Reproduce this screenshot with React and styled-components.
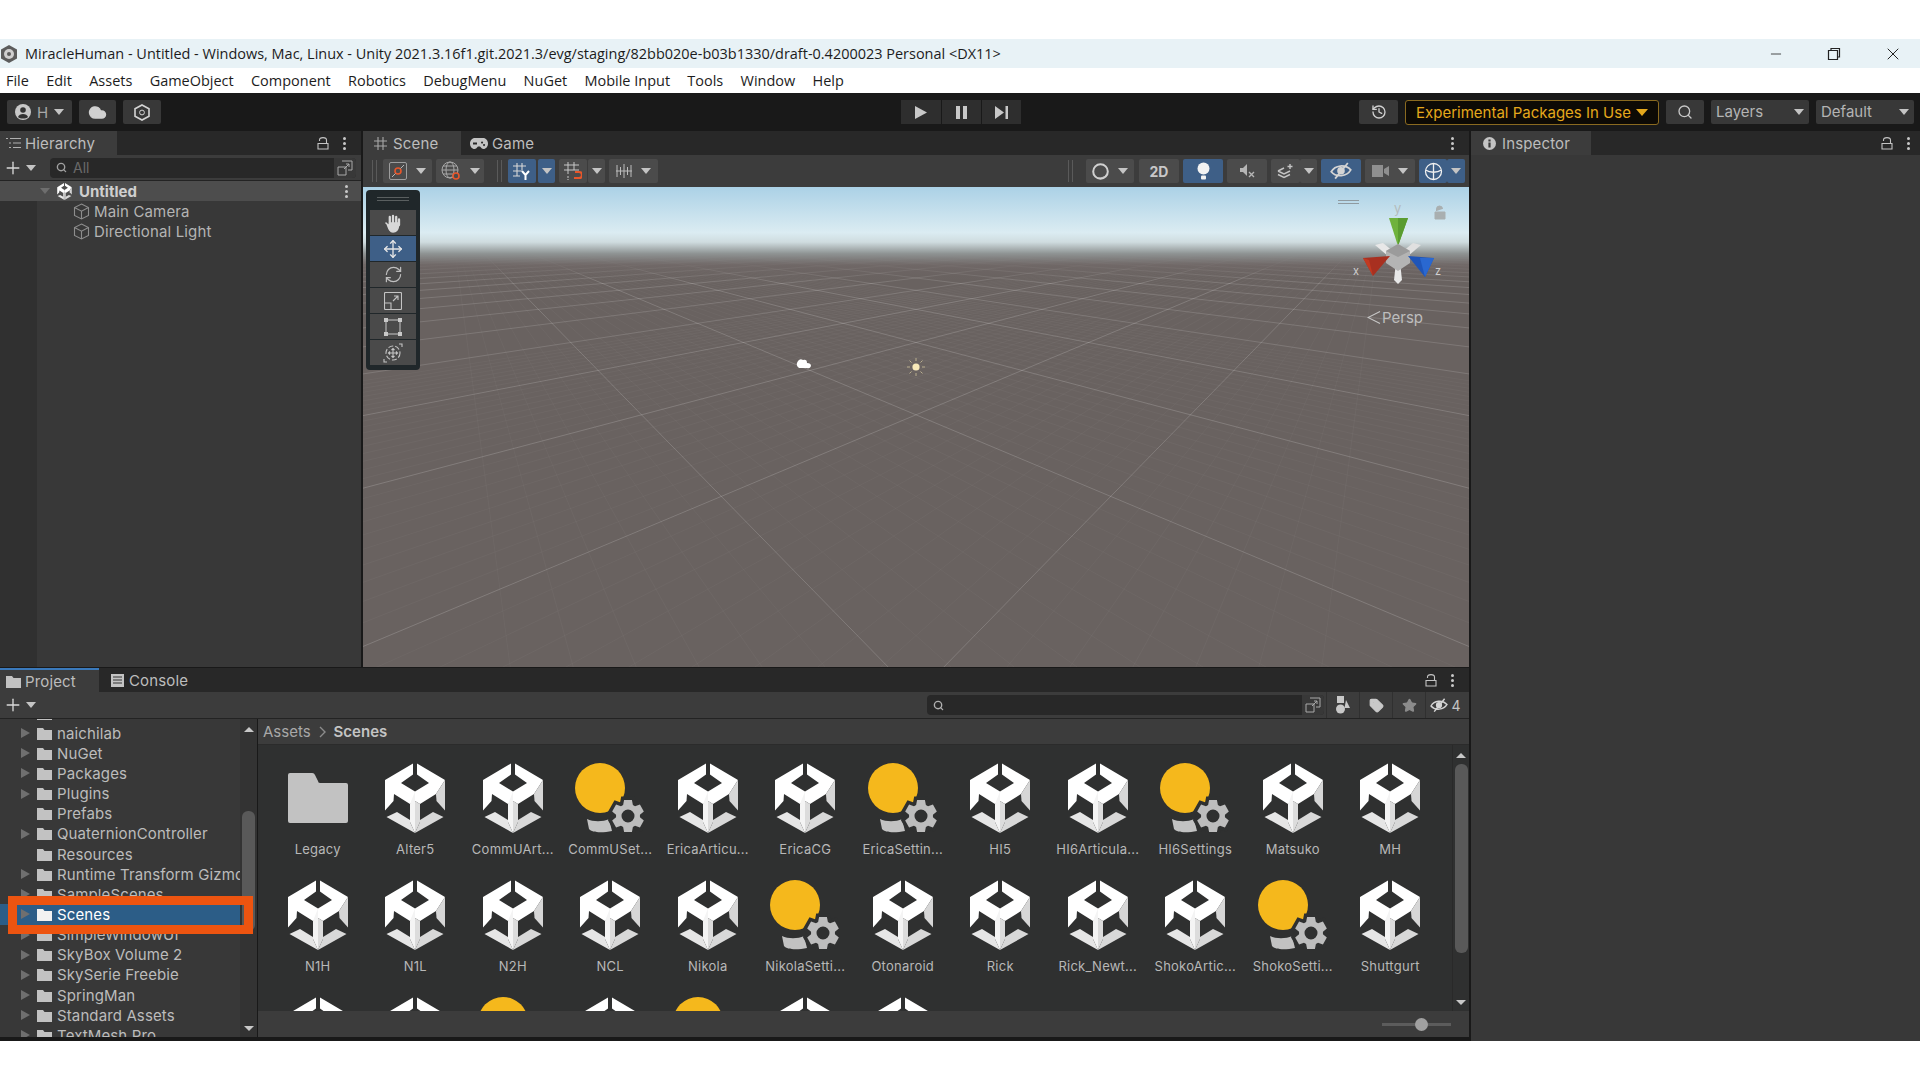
import styled, { createGlobalStyle } from "styled-components";
import { Move, Plus, RefreshCw, Search, Star, Tag, History, Cloud, X, Minus } from "lucide-react";

const GlobalStyle = createGlobalStyle`
  html, body {
    margin: 0;
    background: #ffffff;
  }
  * {
    box-sizing: border-box;
  }
`;

const menus = ["File", "Edit", "Assets", "GameObject", "Component", "Robotics", "DebugMenu", "NuGet", "Mobile Input", "Tools", "Window", "Help"];

const folders = [
  { name: "Oculus", arrow: true },
  { name: "naichilab", arrow: true },
  { name: "NuGet", arrow: true },
  { name: "Packages", arrow: true },
  { name: "Plugins", arrow: true },
  { name: "Prefabs" },
  { name: "QuaternionController", arrow: true },
  { name: "Resources" },
  { name: "Runtime Transform Gizmos", arrow: true },
  { name: "SampleScenes", arrow: true },
  { name: "Scenes", arrow: true, selected: true },
  { name: "SimpleWindowUI", arrow: true },
  { name: "SkyBox Volume 2", arrow: true },
  { name: "SkySerie Freebie", arrow: true },
  { name: "SpringMan", arrow: true },
  { name: "Standard Assets", arrow: true },
  { name: "TextMesh Pro", arrow: true },
];

const assets = [
  ["Legacy", "folder"], ["Alter5", "unity"], ["CommUArt...", "unity"], ["CommUSet...", "light"],
  ["EricaArticu...", "unity"], ["EricaCG", "unity"], ["EricaSettin...", "light"], ["HI5", "unity"],
  ["HI6Articula...", "unity"], ["HI6Settings", "light"], ["Matsuko", "unity"], ["MH", "unity"],
  ["N1H", "unity"], ["N1L", "unity"], ["N2H", "unity"], ["NCL", "unity"],
  ["Nikola", "unity"], ["NikolaSetti...", "light"], ["Otonaroid", "unity"], ["Rick", "unity"],
  ["Rick_Newt...", "unity"], ["ShokoArtic...", "unity"], ["ShokoSetti...", "light"], ["Shuttgurt", "unity"],
  ["", "unity"], ["", "unity"], ["", "light"], ["", "unity"], ["", "light"], ["", "unity"], ["", "unity"],
];

// builds the cog outline used on lighting settings assets
function gearPath(cx, cy, outer, inner, hole) {
  let d = "";
  for (let i = 0; i < 6; i++) {
    const a = (Math.PI / 3) * i - Math.PI / 2;
    const pts = [
      [inner, a - 0.42], [outer, a - 0.24], [outer, a + 0.24], [inner, a + 0.42],
    ];
    pts.forEach(([r, t], n) => {
      const x = (cx + r * Math.cos(t)).toFixed(2);
      const y = (cy + r * Math.sin(t)).toFixed(2);
      d += `${i === 0 && n === 0 ? "M" : "L"}${x} ${y} `;
    });
  }
  d += `Z M${cx + hole} ${cy} A${hole} ${hole} 0 1 0 ${cx - hole} ${cy} A${hole} ${hole} 0 1 0 ${cx + hole} ${cy} Z`;
  return d;
}

// perspective floor, both line families run to a vanishing point on the horizon
function floorLines(vpX, step, limit) {
  const lines = [];
  for (let k = -1.9; k < limit; k += step) {
    const inv = 0.00483 + 0.00303 * k;
    if (inv <= 0) continue;
    const yAtCenter = 220 + 1 / inv;
    const slope = (yAtCenter - 220) / (916 - vpX);
    const edge = vpX > 916 ? -400 : 2400;
    lines.push({ x1: vpX - 363, y1: 220 - 187, x2: edge - 363, y2: 220 + slope * (edge - vpX) - 187 });
  }
  return lines;
}

function UnityLogo({ x = 5, y = 0 }) {
  return (
    <g transform={`translate(${x} ${y})`}>
      <polygon fill="#ffffff" points="28,0.5 28,11.5 16,20 30,28.5 30,38 25,41 9,31 8.5,38 0,47.5 0,17" />
      <polygon fill="#f4f4f4" points="30,28.5 30,70 25,59 25,41" />
      <polygon fill="#ffffff" points="32,0.5 32,11.5 44,20 30,28.5 30,38 35,41 51,31 60,17" />
      <polygon fill="#d6d6d6" points="60,17 60,47.5 51.5,38 51,31" />
      <polygon fill="#dcdcdc" points="30,38 35,41 35,59 30,70" />
      <polygon fill="#e6e6e6" points="1.5,54 12,49 25,57 25,59 30,70" />
      <polygon fill="#d8d8d8" points="58.5,54 48,49 35,57 35,59 30,70" />
    </g>
  );
}

function AssetIcon({ kind }) {
  if (kind === "folder") {
    return (
      <svg width="70" height="70" viewBox="0 0 70 70">
        <path fill="#c2c2c2" d="M5 12 a2 2 0 0 1 2 -2 h22 a3 3 0 0 1 3 2 l3 6 a2 2 0 0 0 2 2 h26 a2 2 0 0 1 2 2 v36 a2 2 0 0 1 -2 2 H7 a2 2 0 0 1 -2 -2 Z" />
      </svg>
    );
  }
  if (kind === "light") {
    return (
      <svg width="70" height="70" viewBox="0 0 70 70">
        <circle cx="25" cy="25" r="25" fill="#f5b81c" />
        <path fill="#c2c2c2" d="M12 56 C18 59 28 59 34 56 L37 68 C28 70 17 70 14 66 Z" />
        <path d={gearPath(53, 53, 16.5, 12, 0.1)} fill="#2f3030" stroke="#2f3030" strokeWidth="7" />
        <path d={gearPath(53, 53, 16.5, 12, 6.5)} fill="#bdbdbd" fillRule="evenodd" />
      </svg>
    );
  }
  return (
    <svg width="70" height="70" viewBox="0 0 70 70">
      <UnityLogo />
    </svg>
  );
}

function FolderGlyph({ color = "#c2c2c2" }) {
  return (
    <svg width="15" height="13" viewBox="0 0 15 13">
      <path fill={color} d="M0 1 h6 l1.5 2 H15 V13 H0 Z" />
    </svg>
  );
}

function CubeGlyph() {
  return (
    <svg width="17" height="17" viewBox="0 0 17 17" fill="none" stroke="#8d8d8d" strokeWidth="1.1">
      <path d="M8.5 1 L15.5 4.6 V12.4 L8.5 16 L1.5 12.4 V4.6 Z M1.5 4.6 L8.5 8.2 L15.5 4.6 M8.5 8.2 V16" />
    </svg>
  );
}

function LockGlyph() {
  return (
    <svg width="12" height="13" viewBox="0 0 12 13" fill="none" stroke="#c4c4c4" strokeWidth="1.1">
      <path d="M2.5 4 V3 a3.5 2.4 0 0 1 7 0 V6 M1 6.5 H11 V12 H1 Z" />
    </svg>
  );
}

function Kebab() {
  return (
    <KebabDots>
      <i />
      <i />
      <i />
    </KebabDots>
  );
}

function ObjectPicker() {
  return (
    <svg width="16" height="16" viewBox="0 0 16 16" fill="none" stroke="#a9a9a9" strokeWidth="1">
      <path d="M5 1 H15 V10 H11 M1 7 H9 V15 H1 Z M7 9 L12 4 M9 4 H12 V7" />
    </svg>
  );
}

function EyeOff({ size = 22 }) {
  return (
    <svg width={size} height={size * 0.8} viewBox="0 0 22 18" fill="none" stroke="#d4d4d4" strokeWidth="1.8">
      <path d="M1 10 C5 3 15 2 21 8 C17 15 6 16 1 10 Z" />
      <circle cx="11" cy="9" r="3" fill="#d4d4d4" />
      <path d="M5 17 L18 1" />
    </svg>
  );
}

export default function App() {
  const majorR = floorLines(1381, 1, 24);
  const majorL = floorLines(451, 1, 24);
  const minorR = floorLines(1381, 0.1, 3);
  const minorL = floorLines(451, 0.1, 3);

  return (
    <Page>
      <GlobalStyle />
      <TopGap />
      <TitleBar>
        <svg width="18" height="18" viewBox="0 0 18 18">
          <path d="M9 0 L17 4.5 V13.5 L9 18 L1 13.5 V4.5 Z" fill="#5c5c5c" />
          <circle cx="9" cy="9" r="5" fill="#cfcfcf" />
          <circle cx="9" cy="9" r="2" fill="#5c5c5c" />
        </svg>
        <TitleText>MiracleHuman - Untitled - Windows, Mac, Linux - Unity 2021.3.16f1.git.2021.3/evg/staging/82bb020e-b03b1330/draft-0.4200023 Personal &lt;DX11&gt;</TitleText>
        <WindowControls>
          <Minus size={16} strokeWidth={1.2} color="#222" />
          <svg width="14" height="14" viewBox="0 0 14 14" fill="none" stroke="#222" strokeWidth="1.2">
            <path d="M4 3 V1.5 H12.5 V10 H10.5 M1.5 3.5 H10.5 V12.5 H1.5 Z" />
          </svg>
          <X size={20} strokeWidth={1.2} color="#222" />
        </WindowControls>
      </TitleBar>
      <MenuBar>
        {menus.map((m) => (
          <MenuItem key={m}>{m}</MenuItem>
        ))}
      </MenuBar>
      <MainToolbar>
        <ToolbarSide>
          <DarkButton $w={65}>
            <svg width="16" height="16" viewBox="0 0 16 16">
              <circle cx="8" cy="8" r="8" fill="#c8c8c8" />
              <circle cx="8" cy="6" r="2.8" fill="#333" />
              <path d="M3 13 C4 9 12 9 13 13 C11 15 5 15 3 13" fill="#333" />
            </svg>
            <DarkLabel>H</DarkLabel>
            <Caret />
          </DarkButton>
          <DarkButton $w={37}>
            <Cloud size={19} fill="#d0d0d0" color="#d0d0d0" />
          </DarkButton>
          <DarkButton $w={38}>
            <svg width="16" height="17" viewBox="0 0 16 17" fill="none" stroke="#d4d4d4" strokeWidth="1.6">
              <path d="M8 1 L15 4.8 V12.2 L8 16 L1 12.2 V4.8 Z" />
              <circle cx="8" cy="8.5" r="2.4" strokeWidth="1" />
            </svg>
          </DarkButton>
        </ToolbarSide>
        <PlayGroup>
          <PlayButton $w={40}>
            <svg width="12" height="13" viewBox="0 0 12 13"><path d="M0 0 L12 6.5 L0 13 Z" fill="#c8c8c8" /></svg>
          </PlayButton>
          <PlayButton $w={39}>
            <svg width="11" height="13" viewBox="0 0 11 13"><path d="M0 0 H4 V13 H0 Z M7 0 H11 V13 H7 Z" fill="#c8c8c8" /></svg>
          </PlayButton>
          <PlayButton $w={39}>
            <svg width="13" height="13" viewBox="0 0 13 13"><path d="M0 0 L9 6.5 L0 13 Z M10.5 0 H13 V13 H10.5 Z" fill="#c8c8c8" /></svg>
          </PlayButton>
        </PlayGroup>
        <ToolbarRight>
          <DarkButton $w={39}>
            <History size={16} color="#d0d0d0" />
          </DarkButton>
          <ExperimentalButton>
            Experimental Packages In Use
            <Caret $color="#e5a81c" $size={6} />
          </ExperimentalButton>
          <DarkButton $w={38}>
            <Search size={16} color="#c8c8c8" />
          </DarkButton>
          <DropButton>
            Layers
            <Caret />
          </DropButton>
          <DropButton>
            Default
            <Caret />
          </DropButton>
        </ToolbarRight>
      </MainToolbar>

      <Workspace>
        <LeftColumn>
          <UpperRow>
            <HierarchyPanel>
              <TabBar>
                <Tab $w={117} $pad={6} $gap={4}>
                  <svg width="15" height="12" viewBox="0 0 15 12" fill="none" stroke="#b0b0b0" strokeWidth="1.2">
                    <path d="M0 1.5 H2 M4 1.5 H15 M3 6 H5 M7 6 H15 M3 10.5 H5 M7 10.5 H15" />
                  </svg>
                  Hierarchy
                </Tab>
                <TabActions $pr={15}>
                  <LockGlyph />
                  <Kebab />
                </TabActions>
              </TabBar>
              <PanelTools>
                <AddButton>
                  <Plus size={20} color="#d8d8d8" strokeWidth={1.6} />
                </AddButton>
                <Caret />
                <SearchField $w={306} $ml={14}>
                  <Search size={11} color="#a0a0a0" strokeWidth={3} />
                  <Placeholder>All</Placeholder>
                  <PickerSlot>
                    <ObjectPicker />
                  </PickerSlot>
                </SearchField>
              </PanelTools>
              <HierarchyBody>
                <SceneRow>
                  <Caret $color="#6e6e6e" />
                  <svg width="17" height="17" viewBox="0 0 60 70">
                    <UnityLogo x={0} />
                  </svg>
                  <SceneName>Untitled</SceneName>
                  <SceneKebab>
                    <Kebab />
                  </SceneKebab>
                </SceneRow>
                <ObjectRow>
                  <CubeGlyph />
                  Main Camera
                </ObjectRow>
                <ObjectRow>
                  <CubeGlyph />
                  Directional Light
                </ObjectRow>
              </HierarchyBody>
            </HierarchyPanel>

            <ScenePanel>
              <TabBar>
                <Tab $w={98} $pad={11} $gap={6}>
                  <svg width="13" height="13" viewBox="0 0 13 13" fill="none" stroke="#a8a8a8" strokeWidth="1.1">
                    <path d="M4 0 V13 M9 0 V13 M0 4 H13 M0 9 H13" />
                  </svg>
                  Scene
                </Tab>
                <PlainTab $pad={9} $gap={4}>
                  <svg width="18" height="11" viewBox="0 0 18 11">
                    <path fill="#c4c4c4" fillRule="evenodd" d="M5 0 H13 C16 0 18 2.5 18 5.5 C18 8.5 16 11 13.5 11 C12 11 11 9.5 10 8.5 H8 C7 9.5 6 11 4.5 11 C2 11 0 8.5 0 5.5 C0 2.5 2 0 5 0 Z M3 4.5 V6.5 H7 V4.5 Z M12 3.5 a1 1 0 1 0 .1 0 Z M14 6 a1 1 0 1 0 .1 0 Z" />
                  </svg>
                  Game
                </PlainTab>
                <TabActions $pr={15}>
                  <Kebab />
                </TabActions>
              </TabBar>
              <SceneTools>
                <Grip />
                <ToolButton $w={49}>
                  <svg width="18" height="18" viewBox="0 0 18 18" fill="none">
                    <rect x="0.5" y="0.5" width="17" height="17" rx="1.5" stroke="#9d9d9d" />
                    <circle cx="9" cy="9" r="3" stroke="#e8562a" strokeWidth="1.6" />
                    <path d="M3 15 L6.5 11.5 M11.5 6.5 L15 3" stroke="#b5b5b5" />
                  </svg>
                  <Caret />
                </ToolButton>
                <ToolButton $w={48} $ml={4}>
                  <svg width="20" height="20" viewBox="0 0 20 20" fill="none" stroke="#a8a8a8" strokeWidth="1">
                    <circle cx="9" cy="9" r="8" />
                    <ellipse cx="9" cy="9" rx="4" ry="8" />
                    <path d="M1 9 H17 M2 5 H16 M2 13 H16" />
                    <circle cx="15" cy="15" r="3" stroke="#e8562a" strokeWidth="1.6" fill="#4b4b4b" />
                  </svg>
                  <Caret />
                </ToolButton>
                <Grip $ml={13} />
                <ToolButton $w={28} $active>
                  <svg width="18" height="18" viewBox="0 0 18 18" fill="none" stroke="#d8d8d8" strokeWidth="1.1">
                    <path d="M4 1 V14 M9 1 V8 M0 4 H13 M0 9 H9 M0 14 H7" />
                    <path d="M9 9 L12.5 13 L16 9 M12.5 13 V18" strokeWidth="2" stroke="#ffffff" />
                  </svg>
                </ToolButton>
                <ToolButton $w={17} $ml={2} $active>
                  <Caret />
                </ToolButton>
                <ToolButton $w={28} $ml={4}>
                  <svg width="18" height="18" viewBox="0 0 18 18" fill="none" stroke="#c8c8c8" strokeWidth="1">
                    <path d="M4 0 V12 M10 0 V8 M0 3 H15 M0 8 H15" />
                    <path d="M11 10 H15 A3 3 0 0 1 15 16 H10" stroke="#e8562a" strokeWidth="2.2" />
                    <path d="M4 14 V18" strokeDasharray="2 1" />
                  </svg>
                </ToolButton>
                <ToolButton $w={17} $ml={1}>
                  <Caret />
                </ToolButton>
                <ToolButton $w={49} $ml={4}>
                  <svg width="16" height="16" viewBox="0 0 16 16" fill="none" stroke="#bdbdbd" strokeWidth="1">
                    <path d="M1 2 V14 M4.5 4 V12 M8 1 V15 M11.5 4 V12 M15 2 V14 M0 8 H16" />
                  </svg>
                  <Caret />
                </ToolButton>
                <SceneToolsRight>
                  <Grip />
                  <ToolButton $w={48} $ml={7}>
                    <svg width="17" height="17" viewBox="0 0 17 17" fill="none">
                      <circle cx="8.5" cy="8.5" r="7.3" stroke="#d0d0d0" strokeWidth="2" />
                      <path d="M3 13 A7 7 0 0 0 15 10 A8 8 0 0 1 3 13" fill="#d0d0d0" />
                    </svg>
                    <Caret />
                  </ToolButton>
                  <ToolButton $w={40} $ml={5}>
                    <ToolText>2D</ToolText>
                  </ToolButton>
                  <ToolButton $w={40} $ml={4} $active>
                    <svg width="13" height="18" viewBox="0 0 13 18">
                      <circle cx="6.5" cy="6.5" r="6" fill="#f2f2f2" />
                      <rect x="4" y="13.5" width="5" height="4" rx="1" fill="#f2f2f2" />
                    </svg>
                  </ToolButton>
                  <ToolButton $w={40} $ml={4}>
                    <svg width="15" height="14" viewBox="0 0 15 14">
                      <path d="M0 4 H3 L7 0 V12 L3 8 H0 Z" fill="#b5b5b5" />
                      <path d="M9 8 L14 13 M14 8 L9 13" stroke="#b5b5b5" strokeWidth="1.4" />
                    </svg>
                  </ToolButton>
                  <ToolButton $w={29} $ml={4}>
                    <svg width="17" height="16" viewBox="0 0 17 16" fill="none" stroke="#c4c4c4" strokeWidth="1.4">
                      <path d="M1 8 L7 11 L13 8 M1 11.5 L7 14.5 L13 11.5 M1 8 L7 5" />
                      <path d="M13 1 V6 M10.5 3.5 H15.5" />
                    </svg>
                  </ToolButton>
                  <ToolButton $w={17}>
                    <Caret />
                  </ToolButton>
                  <ToolButton $w={40} $ml={4} $active>
                    <EyeOff />
                  </ToolButton>
                  <ToolButton $w={50} $ml={4}>
                    <svg width="17" height="12" viewBox="0 0 17 12">
                      <path d="M0 0 H11 V12 H0 Z M12 4 L17 1 V11 L12 8 Z" fill="#8f8f8f" />
                    </svg>
                    <Caret />
                  </ToolButton>
                  <ToolButton $w={28} $ml={4} $active>
                    <svg width="19" height="19" viewBox="0 0 19 19" fill="none" stroke="#f0f0f0" strokeWidth="1.3">
                      <circle cx="9.5" cy="9.5" r="8" />
                      <path d="M1.5 8 C6 11 13 11 17.5 8 M9.5 1.5 V17.5" />
                    </svg>
                  </ToolButton>
                  <ToolButton $w={18} $active>
                    <Caret />
                  </ToolButton>
                </SceneToolsRight>
              </SceneTools>
              <SceneView>
                <FloorDrawing viewBox="0 0 1106 480" preserveAspectRatio="none">
                  <defs>
                    <linearGradient id="sky" x1="0" y1="0" x2="0" y2="1">
                      <stop offset="0" stopColor="#abd1e6" />
                      <stop offset="0.48" stopColor="#dbecf2" />
                      <stop offset="0.58" stopColor="#cfdcdf" />
                      <stop offset="0.7" stopColor="#8f9494" />
                      <stop offset="0.82" stopColor="#716968" stopOpacity="0.85" />
                      <stop offset="1" stopColor="#696260" stopOpacity="0" />
                    </linearGradient>
                  </defs>
                  {[...minorR, ...minorL].map((l, i) => (
                    <line key={`m${i}`} {...l} stroke="#ffffff" strokeOpacity="0.03" />
                  ))}
                  {[...majorR, ...majorL].map((l, i) => (
                    <line key={`l${i}`} {...l} stroke="#ffffff" strokeOpacity="0.14" />
                  ))}
                  <rect x="0" y="0" width="1106" height="95" fill="url(#sky)" />
                  <path d="M435 174 q2 -3 5 -1 q4 -1 4 3 q4 0 4 3 q-1 3 -4 2 h-8 q-4 -3 -1 -7" fill="#ffffff" />
                  <g transform="translate(553 180)" stroke="#b9ae8e" strokeWidth="1">
                    <path d="M0 -9 V-6 M0 6 V9 M-9 0 H-6 M6 0 H9 M-6.5 -6.5 L-4.5 -4.5 M6.5 6.5 L4.5 4.5 M6.5 -6.5 L4.5 -4.5 M-6.5 6.5 L-4.5 4.5" />
                    <circle r="3.6" fill="#f7e8b8" stroke="none" />
                  </g>
                </FloorDrawing>
                <ToolPalette>
                  <PaletteGrip />
                  <PaletteButton>
                    <svg width="20" height="20" viewBox="0 0 20 20" fill="none" stroke="#d8d8d8" strokeLinecap="round">
                      <path d="M10 3 V10 M6.8 4 V10.5 M13.2 4 V10.5 M16 6.5 V12" strokeWidth="2.3" />
                      <path d="M3 10 L6 13 M6.5 10 H15.5 V13 C15 17 13 19 10 19 C7 19 6 16 4.5 12" fill="#d8d8d8" strokeWidth="1.6" />
                    </svg>
                  </PaletteButton>
                  <PaletteButton $active>
                    <Move size={20} color="#e6e6e6" strokeWidth={1.6} />
                  </PaletteButton>
                  <PaletteButton>
                    <RefreshCw size={19} color="#c0c0c0" strokeWidth={1.5} />
                  </PaletteButton>
                  <PaletteButton>
                    <svg width="18" height="18" viewBox="0 0 18 18" fill="none" stroke="#c4c4c4" strokeWidth="1.1">
                      <rect x="0.5" y="0.5" width="17" height="17" rx="1" />
                      <path d="M0.5 11 H7 V17.5 M9 9 L14 4 M10 4 H14 V8" />
                    </svg>
                  </PaletteButton>
                  <PaletteButton>
                    <svg width="18" height="18" viewBox="0 0 18 18" fill="#c8c8c8" stroke="#c8c8c8" strokeWidth="1">
                      <path d="M3 2 H15 M3 16 H15 M2 3 V15 M16 3 V15" fill="none" />
                      <rect x="0.5" y="0.5" width="3" height="3" />
                      <rect x="14.5" y="0.5" width="3" height="3" />
                      <rect x="0.5" y="14.5" width="3" height="3" />
                      <rect x="14.5" y="14.5" width="3" height="3" />
                    </svg>
                  </PaletteButton>
                  <PaletteButton>
                    <svg width="20" height="20" viewBox="0 0 20 20" fill="none" stroke="#c4c4c4" strokeWidth="1.1">
                      <circle cx="10" cy="10" r="7" strokeDasharray="5 2" />
                      <path d="M10 5.5 V14.5 M5.5 10 H14.5 M8.5 7 L10 5.5 L11.5 7 M8.5 13 L10 14.5 L11.5 13 M7 8.5 L5.5 10 L7 11.5 M13 8.5 L14.5 10 L13 11.5" />
                      <path d="M16 1 H19 V4 M1 16 V19 H4" />
                    </svg>
                  </PaletteButton>
                </ToolPalette>
                <ViewGrip />
                <GizmoDrawing width="100" height="100" viewBox="0 0 100 100">
                  <text x="44" y="13" fontSize="13" fill="#b4bcbc" fontFamily="Inter, sans-serif">y</text>
                  <text x="3" y="75" fontSize="11" fill="#d0d0d0" fontFamily="Inter, sans-serif">x</text>
                  <text x="85" y="75" fontSize="11" fill="#d0d0d0" fontFamily="Inter, sans-serif">z</text>
                  <polygon points="39,18 58,18 48,46" fill="#6fb23c" />
                  <polygon points="48,18 58,18 48,46" fill="#5a9c30" />
                  <polygon points="25,45 33,43 44,52 38,56" fill="#e8e8e8" />
                  <polygon points="71,45 63,43 52,52 58,56" fill="#e0e0e0" />
                  <polygon points="48,84 44,80 46,62 50,62 52,80" fill="#e8e8e8" />
                  <polygon points="48,44 60,51 60,63 48,71 36,63 36,51" fill="#b4b4b4" />
                  <polygon points="48,44 60,51 48,57 36,51" fill="#9b9b9b" />
                  <polygon points="13,58 40,56 23,76" fill="#a83020" />
                  <polygon points="13,58 23,76 19,60" fill="#c23a22" />
                  <polygon points="58,56 84,58 75,77" fill="#1f55b8" />
                  <polygon points="75,77 84,58 70,58" fill="#2a68d0" />
                  <path d="M86.5 11 V9 a3 3 0 0 1 6 0 M85 12 H95 V19 H85 Z" fill="#a9afb0" stroke="#a9afb0" />
                </GizmoDrawing>
                <PerspLabel>
                  <svg width="14" height="13" viewBox="0 0 14 13" fill="none" stroke="#c8c8c8" strokeWidth="1.1">
                    <path d="M13 0.5 L1 6.5 L13 12.5" />
                  </svg>
                  Persp
                </PerspLabel>
              </SceneView>
            </ScenePanel>
          </UpperRow>

          <ProjectPanel>
            <TabBar>
              <Tab $w={99} $pad={6} $gap={4} $focused>
                <FolderGlyph />
                Project
              </Tab>
              <PlainTab $pad={12} $gap={5}>
                <svg width="13" height="13" viewBox="0 0 13 13">
                  <path fill="#c4c4c4" d="M0 0 H13 V13 H0 Z" />
                  <path stroke="#333" strokeWidth="1" d="M2 3 H11 M2 6 H11 M2 9 H11" />
                </svg>
                Console
              </PlainTab>
              <TabActions $pr={15}>
                <LockGlyph />
                <Kebab />
              </TabActions>
            </TabBar>
            <ProjectTools>
              <AddButton>
                <Plus size={20} color="#d8d8d8" strokeWidth={1.6} />
              </AddButton>
              <Caret />
              <SearchField $w={397} $ml="auto">
                <Search size={11} color="#b0b0b0" strokeWidth={3} />
                <Placeholder />
                <PickerSlot>
                  <ObjectPicker />
                </PickerSlot>
              </SearchField>
              <FilterButton $w={33} $ml={2}>
                <svg width="16" height="18" viewBox="0 0 16 18" fill="#c8c8c8">
                  <rect x="2" y="0" width="7" height="7" />
                  <circle cx="5.5" cy="13" r="4.5" />
                  <path d="M11 4 L15 12 H9.5 Z" />
                </svg>
              </FilterButton>
              <FilterButton $w={33}>
                <Tag size={15} fill="#c8c8c8" color="#c8c8c8" />
              </FilterButton>
              <FilterButton $w={33}>
                <Star size={15} fill="#8b8b8b" color="#8b8b8b" />
              </FilterButton>
              <FilterButton $w={40}>
                <EyeOff size={18} />
                <CountLabel>4</CountLabel>
              </FilterButton>
            </ProjectTools>
            <ProjectBody>
              <FolderTree>
                <TreeList>
                  {folders.map((f) => (
                    <TreeRow key={f.name} $selected={f.selected}>
                      <TreeArrow $show={f.arrow} />
                      <FolderGlyph color={f.selected ? "#f2f2f2" : "#c2c2c2"} />
                      <TreeName $selected={f.selected}>{f.name}</TreeName>
                    </TreeRow>
                  ))}
                </TreeList>
                <TreeScroll>
                  <ScrollArrow />
                  <TreeThumb />
                  <ScrollArrow $down $auto />
                </TreeScroll>
              </FolderTree>
              <AssetArea>
                <Breadcrumb>
                  Assets
                  <svg width="7" height="12" viewBox="0 0 7 12" fill="none" stroke="#8c8c8c" strokeWidth="1.4">
                    <path d="M1 1 L6 6 L1 11" />
                  </svg>
                  <strong>Scenes</strong>
                </Breadcrumb>
                <AssetBody>
                  <AssetGrid>
                    {assets.map(([name, kind], i) => (
                      <AssetCell key={i}>
                        <AssetIcon kind={kind} />
                        <AssetName>{name}</AssetName>
                      </AssetCell>
                    ))}
                  </AssetGrid>
                  <AssetScroll>
                    <ScrollArrow />
                    <AssetThumb />
                    <ScrollArrow $down $auto />
                  </AssetScroll>
                </AssetBody>
                <AssetFooter>
                  <SliderTrack>
                    <SliderKnob />
                  </SliderTrack>
                </AssetFooter>
              </AssetArea>
            </ProjectBody>
          </ProjectPanel>
        </LeftColumn>

        <InspectorPanel>
          <TabBar>
            <Tab $w={120} $pad={12} $gap={6}>
              <svg width="13" height="13" viewBox="0 0 13 13">
                <circle cx="6.5" cy="6.5" r="6.5" fill="#c4c4c4" />
                <rect x="5.4" y="5.5" width="2.2" height="5" fill="#383838" />
                <rect x="5.4" y="2.5" width="2.2" height="2" fill="#383838" />
              </svg>
              Inspector
            </Tab>
            <TabActions $pr={10}>
              <LockGlyph />
              <Kebab />
            </TabActions>
          </TabBar>
        </InspectorPanel>
      </Workspace>
      <BottomGap />
      <Highlight />
    </Page>
  );
}

const Page = styled.div`
  position: relative;
  width: 1920px;
  height: 1080px;
  display: flex;
  flex-direction: column;
  overflow: hidden;
  font-family: Inter, "Noto Sans", sans-serif;
`;
const TopGap = styled.div`
  height: 39px;
  background: #ffffff;
`;
const TitleBar = styled.div`
  height: 29px;
  background: #e8f2f6;
  display: flex;
  align-items: center;
`;
const TitleText = styled.span`
  margin-left: 7px;
  font-family: "Open Sans", sans-serif;
  font-size: 14.47px;
  color: #1c1c1c;
  white-space: nowrap;
`;
const WindowControls = styled.div`
  margin-left: auto;
  width: 152px;
  padding-right: 17px;
  display: flex;
  align-items: center;
  justify-content: space-between;
`;
const MenuBar = styled.div`
  height: 25px;
  background: #ffffff;
  display: flex;
  align-items: center;
  padding-left: 6px;
  gap: 17.3px;
`;
const MenuItem = styled.span`
  font-family: "Open Sans", sans-serif;
  font-size: 14.47px;
  color: #1c1c1c;
`;
const MainToolbar = styled.div`
  height: 38px;
  background: #191919;
  display: grid;
  grid-template-columns: 1fr auto 1fr;
  align-items: center;
  padding: 0 6px 0 7px;
`;
const ToolbarSide = styled.div`
  display: flex;
  gap: 7px;
`;
const ToolbarRight = styled(ToolbarSide)`
  justify-content: flex-end;
`;
const DarkButton = styled.div`
  width: ${(p) => p.$w}px;
  height: 24px;
  background: #383838;
  border-radius: 2px;
  display: flex;
  align-items: center;
  justify-content: center;
  gap: 6px;
`;
const DarkLabel = styled.span`
  color: #a8a8a8;
  font-size: 15px;
`;
const PlayGroup = styled.div`
  display: flex;
  gap: 1px;
`;
const PlayButton = styled(DarkButton)`
  background: #2e2e2e;
  border-radius: 0;
`;
const ExperimentalButton = styled.div`
  width: 254px;
  height: 25px;
  background: #0d0a05;
  border: 1px solid #8a6a20;
  border-radius: 3px;
  color: #e5a81c;
  font-size: 15px;
  display: flex;
  align-items: center;
  justify-content: center;
  gap: 5px;
  white-space: nowrap;
`;
const DropButton = styled.div`
  width: 98px;
  height: 24px;
  background: #383838;
  border-radius: 2px;
  color: #b4b4b4;
  font-size: 15px;
  display: flex;
  align-items: center;
  justify-content: space-between;
  padding: 0 5px;
`;
const Caret = styled.span`
  width: 0;
  height: 0;
  flex: none;
  border-left: ${(p) => p.$size || 5}px solid transparent;
  border-right: ${(p) => p.$size || 5}px solid transparent;
  border-top: ${(p) => (p.$size || 5) + 1}px solid ${(p) => p.$color || "#c4c4c4"};
`;
const Workspace = styled.div`
  height: 910px;
  background: #191919;
  display: flex;
  gap: 2px;
`;
const LeftColumn = styled.div`
  width: 1469px;
  display: flex;
  flex-direction: column;
  gap: 1px;
`;
const UpperRow = styled.div`
  height: 536px;
  display: flex;
  gap: 2px;
`;
const Panel = styled.div`
  display: flex;
  flex-direction: column;
  background: #383838;
  overflow: hidden;
`;
const HierarchyPanel = styled(Panel)`
  width: 361px;
`;
const ScenePanel = styled(Panel)`
  flex: 1;
`;
const InspectorPanel = styled(Panel)`
  flex: 1;
`;
const ProjectPanel = styled(Panel)`
  flex: 1;
  padding-bottom: 4px;
  background: #191919;
`;
const TabBar = styled.div`
  height: 24px;
  flex: none;
  background: #282828;
  display: flex;
  align-items: stretch;
  color: #bdbdbd;
  font-size: 15px;
  letter-spacing: 0.15px;
`;
const Tab = styled.div`
  width: ${(p) => p.$w}px;
  background: #3c3c3c;
  display: flex;
  align-items: center;
  gap: ${(p) => p.$gap}px;
  padding-left: ${(p) => p.$pad}px;
  border-top: ${(p) => (p.$focused ? "2px solid #3a79bb" : "none")};
`;
const PlainTab = styled.div`
  display: flex;
  align-items: center;
  gap: ${(p) => p.$gap}px;
  padding-left: ${(p) => p.$pad}px;
`;
const TabActions = styled.div`
  margin-left: auto;
  padding-right: ${(p) => p.$pr}px;
  display: flex;
  align-items: center;
  gap: 14px;
`;
const KebabDots = styled.span`
  display: flex;
  flex-direction: column;
  gap: 2px;
  i {
    width: 3px;
    height: 3px;
    border-radius: 50%;
    background: #c8c8c8;
  }
`;
const PanelTools = styled.div`
  height: 26px;
  flex: none;
  background: #3c3c3c;
  border-bottom: 1px solid #232323;
  display: flex;
  align-items: center;
  padding-left: 3px;
`;
const ProjectTools = styled(PanelTools)`
  height: 27px;
  padding-right: 4px;
`;
const AddButton = styled.span`
  width: 20px;
  height: 20px;
  margin-right: 3px;
  display: flex;
`;
const SearchField = styled.div`
  width: ${(p) => p.$w}px;
  height: 20px;
  margin-left: ${(p) => (p.$ml === "auto" ? "auto" : `${p.$ml}px`)};
  background: #282828;
  border-radius: 4px;
  display: flex;
  align-items: center;
  padding-left: 6px;
`;
const Placeholder = styled.span`
  margin-left: 6px;
  flex: 1;
  color: #6a6a6a;
  font-size: 14px;
`;
const PickerSlot = styled.span`
  width: 22px;
  height: 20px;
  background: #383838;
  border-radius: 0 4px 4px 0;
  display: flex;
  align-items: center;
  justify-content: center;
`;
const HierarchyBody = styled.div`
  flex: 1;
  background: linear-gradient(90deg, #303030 37px, #383838 37px);
`;
const SceneRow = styled.div`
  height: 20px;
  background: #4d4d4d;
  display: flex;
  align-items: center;
  padding-left: 40px;
  color: #cfcfcf;
  gap: 6px;
`;
const SceneName = styled.span`
  font-size: 15px;
  font-weight: 700;
`;
const SceneKebab = styled.span`
  margin-left: auto;
  padding-right: 13px;
`;
const ObjectRow = styled.div`
  height: 20px;
  display: flex;
  align-items: center;
  gap: 4px;
  padding-left: 73px;
  color: #b4b4b4;
  font-size: 15px;
  letter-spacing: 0.15px;
`;
const SceneTools = styled.div`
  height: 32px;
  flex: none;
  background: #3c3c3c;
  display: flex;
  align-items: center;
  padding: 4px 4px 4px 9px;
`;
const SceneToolsRight = styled.div`
  margin-left: auto;
  display: flex;
  align-items: center;
`;
const Grip = styled.span`
  width: 5px;
  height: 22px;
  margin-left: ${(p) => p.$ml || 0}px;
  margin-right: 6px;
  border-left: 1px solid #5a5a5a;
  border-right: 1px solid #5a5a5a;
`;
const ToolButton = styled.div`
  width: ${(p) => p.$w}px;
  height: 24px;
  margin-left: ${(p) => p.$ml || 0}px;
  background: ${(p) => (p.$active ? "#3e5f87" : "#4b4b4b")};
  border-radius: 2px;
  display: flex;
  align-items: center;
  justify-content: center;
  gap: 9px;
`;
const ToolText = styled.span`
  color: #c8c8c8;
  font-size: 14px;
  font-weight: 700;
`;
const SceneView = styled.div`
  position: relative;
  flex: 1;
  background: #696260;
  overflow: hidden;
`;
const FloorDrawing = styled.svg`
  position: absolute;
  inset: 0;
  width: 100%;
  height: 100%;
`;
const ToolPalette = styled.div`
  position: absolute;
  left: 3px;
  top: 3px;
  width: 54px;
  height: 180px;
  background: #20272a;
  border-radius: 4px;
  padding: 0 4px;
  display: flex;
  flex-direction: column;
  gap: 1px;
`;
const PaletteGrip = styled.div`
  height: 4px;
  margin: 7px 7px 8px;
  border-top: 1px solid #5a5f60;
  border-bottom: 1px solid #5a5f60;
`;
const PaletteButton = styled.div`
  height: 25px;
  background: ${(p) => (p.$active ? "#3e5f87" : "#4a4a4a")};
  display: flex;
  align-items: center;
  justify-content: center;
`;
const ViewGrip = styled.div`
  position: absolute;
  left: 975px;
  top: 13px;
  width: 21px;
  height: 4px;
  border-top: 1px solid #8f9aa0;
  border-bottom: 1px solid #8f9aa0;
`;
const GizmoDrawing = styled.svg`
  position: absolute;
  left: 987px;
  top: 13px;
`;
const PerspLabel = styled.div`
  position: absolute;
  left: 1004px;
  top: 121px;
  display: flex;
  align-items: center;
  gap: 1px;
  color: #bdbdbd;
  font-size: 15px;
`;
const FilterButton = styled.div`
  width: ${(p) => p.$w}px;
  height: 26px;
  margin-left: ${(p) => p.$ml || 0}px;
  border-left: 1px solid #303030;
  display: flex;
  align-items: center;
  justify-content: center;
  gap: 3px;
`;
const CountLabel = styled.span`
  color: #c4c4c4;
  font-size: 14px;
`;
const ProjectBody = styled.div`
  flex: 1;
  display: flex;
  min-height: 0;
  gap: 1px;
`;
const FolderTree = styled.div`
  width: 257px;
  background: #383838;
  display: flex;
  overflow: hidden;
`;
const TreeList = styled.div`
  flex: 1;
  min-width: 0;
  overflow: hidden;
  margin-top: -16px;
`;
const TreeRow = styled.div`
  height: 20.15px;
  display: flex;
  align-items: center;
  padding-left: 21px;
  background: ${(p) => (p.$selected ? "#2c5d87" : "transparent")};
  white-space: nowrap;
  svg {
    flex: none;
  }
`;
const TreeArrow = styled.span`
  width: 0;
  height: 0;
  flex: none;
  margin-right: 7px;
  border-top: 5.5px solid transparent;
  border-bottom: 5.5px solid transparent;
  border-left: 9px solid ${(p) => (p.$show ? "#6f6f6f" : "transparent")};
`;
const TreeName = styled.span`
  margin-left: 5px;
  color: ${(p) => (p.$selected ? "#ffffff" : "#bcbcbc")};
  font-size: 15px;
  letter-spacing: 0.12px;
`;
const TreeScroll = styled.div`
  width: 17px;
  flex: none;
  background: #333333;
  display: flex;
  flex-direction: column;
  align-items: center;
  padding: 8px 0 6px;
`;
const ScrollArrow = styled.span`
  width: 0;
  height: 0;
  flex: none;
  margin-top: ${(p) => (p.$auto ? "auto" : 0)};
  border-left: 5px solid transparent;
  border-right: 5px solid transparent;
  border-bottom: ${(p) => (p.$down ? "0" : "5px solid #c8c8c8")};
  border-top: ${(p) => (p.$down ? "5px solid #c8c8c8" : "0")};
`;
const TreeThumb = styled.span`
  width: 13px;
  height: 120px;
  margin-top: 79px;
  border-radius: 6px;
  background: #595959;
`;
const AssetArea = styled.div`
  flex: 1;
  min-width: 0;
  display: flex;
  flex-direction: column;
`;
const Breadcrumb = styled.div`
  height: 26px;
  flex: none;
  background: #3c3c3c;
  border-bottom: 1px solid #2b2b2b;
  display: flex;
  align-items: center;
  gap: 8px;
  padding-left: 5px;
  color: #a8a8a8;
  font-size: 15px;
  strong {
    color: #c4c4c4;
    font-weight: 600;
  }
`;
const AssetBody = styled.div`
  flex: 1;
  min-height: 0;
  background: #2f3030;
  display: flex;
`;
const AssetGrid = styled.div`
  flex: 1;
  min-width: 0;
  overflow: hidden;
  padding: 18px 0 0 11px;
  display: grid;
  grid-template-columns: repeat(12, 97.5px);
  grid-auto-rows: 117px;
`;
const AssetCell = styled.div`
  display: flex;
  flex-direction: column;
  align-items: center;
`;
const AssetName = styled.span`
  margin-top: 8px;
  color: #b8b8b8;
  font-size: 13px;
  letter-spacing: 0.25px;
  white-space: nowrap;
`;
const AssetScroll = styled.div`
  width: 17px;
  flex: none;
  display: flex;
  flex-direction: column;
  align-items: center;
  padding: 8px 0 6px;
  border-left: 1px solid #292929;
`;
const AssetThumb = styled.span`
  width: 13px;
  height: 189px;
  margin-top: 6px;
  border-radius: 6px;
  background: #595959;
`;
const AssetFooter = styled.div`
  height: 26px;
  flex: none;
  background: #3c3c3c;
  display: flex;
  align-items: center;
  justify-content: flex-end;
  padding-right: 18px;
`;
const SliderTrack = styled.div`
  position: relative;
  width: 69px;
  height: 3px;
  background: #5c5c5c;
`;
const SliderKnob = styled.span`
  position: absolute;
  left: 33px;
  top: -5px;
  width: 13px;
  height: 13px;
  border-radius: 50%;
  background: #a0a0a0;
`;
const BottomGap = styled.div`
  flex: 1;
  background: #ffffff;
`;
const Highlight = styled.div`
  position: absolute;
  left: 8px;
  top: 896px;
  width: 245px;
  height: 38px;
  border: 9px solid #ed5410;
`;
